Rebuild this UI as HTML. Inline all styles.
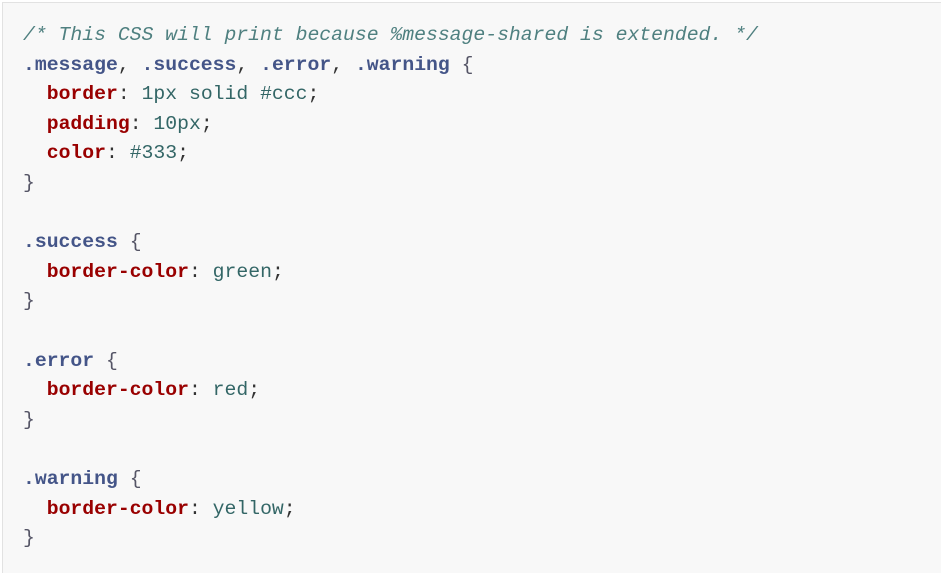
<!DOCTYPE html>
<html><head><style>
html,body{margin:0;padding:0;background:#fff;}
body{width:941px;height:563px;overflow:hidden;position:relative;}
.box{position:absolute;left:2px;top:2px;width:945px;height:570px;background:#f8f8f8;border-left:1px solid #e2e2e2;border-top:1px solid #e2e2e2;}
pre{position:absolute;left:23px;top:21px;margin:0;font-family:"Liberation Mono",monospace;font-size:19.76px;line-height:29.6px;color:#333;}
.c{color:#4f8080;font-style:italic;}
.s{color:#445588;font-weight:bold;}
.p{color:#990000;font-weight:bold;}
.v{color:#336666;}
.b{color:#556;}
</style></head><body>
<div class="box"></div>
<pre><span class="c">/* This CSS will print because %message-shared is extended. */</span>
<span class="s">.message</span>, <span class="s">.success</span>, <span class="s">.error</span>, <span class="s">.warning</span> <span class="b">{</span>
  <span class="p">border</span>: <span class="v">1px solid #ccc</span>;
  <span class="p">padding</span>: <span class="v">10px</span>;
  <span class="p">color</span>: <span class="v">#333</span>;
<span class="b">}</span>

<span class="s">.success</span> <span class="b">{</span>
  <span class="p">border-color</span>: <span class="v">green</span>;
<span class="b">}</span>

<span class="s">.error</span> <span class="b">{</span>
  <span class="p">border-color</span>: <span class="v">red</span>;
<span class="b">}</span>

<span class="s">.warning</span> <span class="b">{</span>
  <span class="p">border-color</span>: <span class="v">yellow</span>;
<span class="b">}</span></pre>
</body></html>
